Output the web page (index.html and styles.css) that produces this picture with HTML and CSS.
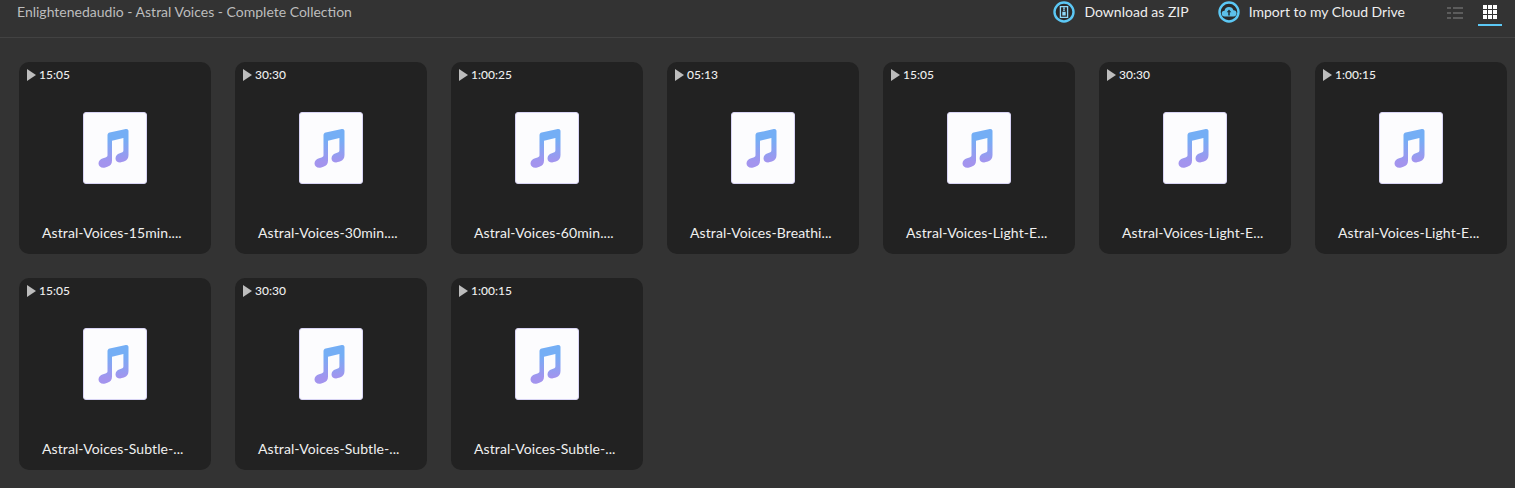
FILE: index.html
```html
<!DOCTYPE html>
<html lang="en">
<head>
<meta charset="utf-8">
<title>Astral Voices</title>
<link rel="stylesheet" href="styles.css">
</head>
<body>
<svg class="defs" width="0" height="0" aria-hidden="true">
  <defs>
    <linearGradient id="note" gradientUnits="userSpaceOnUse" x1="0" y1="27" x2="0" y2="50">
      <stop offset="0" stop-color="#74aef5"/>
      <stop offset="1" stop-color="#a394ee"/>
    </linearGradient>
    <symbol id="music" viewBox="1 1 62 70">
      <path fill="url(#note)" d="M24.500 23.200c0-1.400.8-2.300 2.200-2.600L42.800 17.100c1.500-.3 2.700.5 2.700 2V43c0 3.200-1.300 5.300-4.600 6.400l-2 .7c-3.200 1-6.400-.7-6.400-3.700 0-2.600 1.600-4.300 4.300-5.200l2.600-.9c.7-.3 1-.9 1-1.700V26L29 28.700V48.500c0 3.200-1.300 5.200-4.600 6.300l-2.200.7c-3.400 1-6.700-.8-6.700-3.900 0-2.700 1.800-4.500 4.600-5.400l2.400-.8c1.500-.5 2-1.100 2-2.500z"/>
    </symbol>
    <symbol id="play" viewBox="0 0 10 12">
      <path fill="#bdbdbd" d="M0 0l9 6-9 6z"/>
    </symbol>
  </defs>
</svg>
<header class="topbar">
  <div class="title">Enlightenedaudio - Astral Voices - Complete Collection</div>
  <div class="actions">
    <a class="action action-zip">
      <svg class="round-icon" viewBox="0 0 22 22"><circle cx="11" cy="11" r="9.500" fill="#2a2a2a" stroke="#5cc8f5" stroke-width="2.400"/><path fill="none" stroke="#8fd8f7" stroke-width="1.300" d="M7.400 5.600h7.200v10.800H7.400z"/><path fill="#8fd8f7" d="M10 6.500h2v1.300h-2zM10 8.500h2v1.300h-2zM9.300 10.800h3.400v3.700H9.300z"/></svg>
      <span>Download as ZIP</span>
    </a>
    <a class="action action-cloud">
      <svg class="round-icon" viewBox="0 0 22 22"><circle cx="11" cy="11" r="9.500" fill="#2a2a2a" stroke="#5cc8f5" stroke-width="2.400"/><path fill="#5cc0ea" d="M6.800 15.500a2.900 2.900 0 0 1-.3-5.800 4.600 4.600 0 0 1 8.900-.4 3.100 3.100 0 0 1 .1 6.200z"/><path fill="#23343c" d="M11 8.500l2.300 2.700h-1.500v3.300h-1.600v-3.300H8.700z"/></svg>
      <span>Import to my Cloud Drive</span>
    </a>
    <div class="views">
      <div class="view">
        <svg class="view-icon" viewBox="0 0 16 14"><path fill="#5c5c5c" d="M0 2h4v2H0zM6 2h10v2H6zM0 7h4v2H0zM6 7h10v2H6zM0 12h4v2H0zM6 12h10v2H6z"/></svg>
      </div>
      <div class="view view-on">
        <svg class="view-icon" viewBox="0 0 16 14"><path fill="#fff" d="M1 0h4v4H1zM6 0h4v4H6zM11 0h4v4h-4zM1 5h4v4H1zM6 5h4v4H6zM11 5h4v4h-4zM1 10h4v4H1zM6 10h4v4H6zM11 10h4v4h-4z"/></svg>
      </div>
    </div>
  </div>
</header>
<main class="grid">
  <article class="card"><div class="time"><svg class="play"><use href="#play"/></svg>15:05</div><div class="thumb"><svg class="note"><use href="#music"/></svg></div><div class="name">Astral-Voices-15min....</div></article>
  <article class="card"><div class="time"><svg class="play"><use href="#play"/></svg>30:30</div><div class="thumb"><svg class="note"><use href="#music"/></svg></div><div class="name">Astral-Voices-30min....</div></article>
  <article class="card"><div class="time"><svg class="play"><use href="#play"/></svg>1:00:25</div><div class="thumb"><svg class="note"><use href="#music"/></svg></div><div class="name">Astral-Voices-60min....</div></article>
  <article class="card"><div class="time"><svg class="play"><use href="#play"/></svg>05:13</div><div class="thumb"><svg class="note"><use href="#music"/></svg></div><div class="name">Astral-Voices-Breathi...</div></article>
  <article class="card"><div class="time"><svg class="play"><use href="#play"/></svg>15:05</div><div class="thumb"><svg class="note"><use href="#music"/></svg></div><div class="name">Astral-Voices-Light-E...</div></article>
  <article class="card"><div class="time"><svg class="play"><use href="#play"/></svg>30:30</div><div class="thumb"><svg class="note"><use href="#music"/></svg></div><div class="name">Astral-Voices-Light-E...</div></article>
  <article class="card"><div class="time"><svg class="play"><use href="#play"/></svg>1:00:15</div><div class="thumb"><svg class="note"><use href="#music"/></svg></div><div class="name">Astral-Voices-Light-E...</div></article>
  <article class="card"><div class="time"><svg class="play"><use href="#play"/></svg>15:05</div><div class="thumb"><svg class="note"><use href="#music"/></svg></div><div class="name">Astral-Voices-Subtle-...</div></article>
  <article class="card"><div class="time"><svg class="play"><use href="#play"/></svg>30:30</div><div class="thumb"><svg class="note"><use href="#music"/></svg></div><div class="name">Astral-Voices-Subtle-...</div></article>
  <article class="card"><div class="time"><svg class="play"><use href="#play"/></svg>1:00:15</div><div class="thumb"><svg class="note"><use href="#music"/></svg></div><div class="name">Astral-Voices-Subtle-...</div></article>
</main>
</body>
</html>
```
FILE: styles.css
```css
* { box-sizing: border-box; }
html, body { margin: 0; height: 100%; overflow: hidden; }
body {
  background: #333333;
  font-family: Lato, "Noto Sans", sans-serif;
  color: #fff;
}
.defs { display: block; height: 0; }
.topbar {
  height: 38px;
  display: flex;
  justify-content: space-between;
  border-bottom: 1px solid #424242;
  padding: 0 13px 0 17px;
}
.title {
  font-size: 14px;
  line-height: 24px;
  color: #bdbdbd;
}
.actions { display: flex; align-items: flex-start; }
.action {
  display: flex;
  align-items: flex-start;
  font-size: 14px;
  line-height: 24px;
  color: #eeeeee;
}
.action-zip { margin-right: 28px; }
.action-cloud { margin-right: 38px; }
.round-icon { width: 22px; height: 22px; margin: 1px 9px 0 1px; }
.views { display: flex; gap: 11px; }
.view {
  width: 24px;
  height: 26px;
  display: flex;
  justify-content: center;
  padding-top: 5px;
}
.view-on { border-bottom: 2px solid #5cc8f5; }
.view-icon { width: 16px; height: 14px; }
.grid {
  display: grid;
  grid-template-columns: repeat(7, 192px);
  gap: 24px;
  padding: 24px 19px;
}
.card {
  position: relative;
  height: 192px;
  background: #222222;
  border-radius: 10px;
  display: flex;
  flex-direction: column;
  align-items: center;
  padding-top: 50px;
}
.time {
  position: absolute;
  top: 6px;
  left: 8px;
  display: flex;
  align-items: center;
  font-size: 12px;
  font-weight: 500;
  line-height: 14px;
  color: #eeeeee;
}
.play { width: 10px; height: 12px; margin-right: 2px; }
.thumb {
  width: 64px;
  height: 72px;
  background: #fcfcfe;
  border-radius: 3px;
  border: 1px solid #d8d4f4;
}
.note { display: block; width: 62px; height: 70px; }
.name {
  align-self: flex-start;
  margin: 40px 0 0 23px;
  font-size: 14px;
  line-height: 18px;
  letter-spacing: 0.09px;
  color: #f0f0f0;
}
```
